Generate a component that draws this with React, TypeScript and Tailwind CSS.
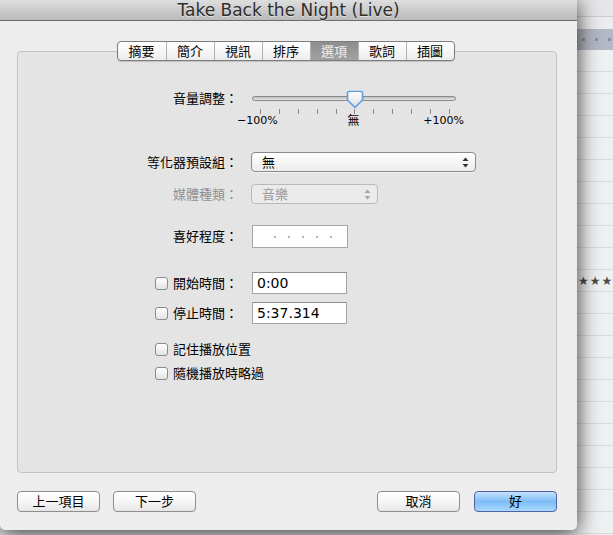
import React from 'react';

const FONT = "font-['DejaVu_Sans','Noto_Sans_CJK_TC',sans-serif]";

const tabs = ['摘要', '簡介', '視訊', '排序', '選項', '歌詞', '插圖'];

function Checkbox() {
  return (
    <span className="inline-block w-[13px] h-[13px] shrink-0 rounded-[3px] border border-[#8c8c8c] bg-gradient-to-b from-white to-[#e4e4e4] shadow-[inset_0_1px_0_#fff]" />
  );
}

function Arrows({ color }: { color: string }) {
  return (
    <svg width="7" height="11" viewBox="0 0 7 11" className="shrink-0">
      <path d="M3.5 0.5 L6.5 4 L0.5 4 Z" fill={color} />
      <path d="M3.5 10.5 L6.5 7 L0.5 7 Z" fill={color} />
    </svg>
  );
}

function Thumb() {
  return (
    <svg width="18" height="19" viewBox="0 0 18 19" className="absolute left-[95px] top-[2px]">
      <defs>
        <linearGradient id="tg" x1="0" y1="0" x2="0" y2="1">
          <stop offset="0" stopColor="#ffffff" />
          <stop offset="1" stopColor="#dcdcdc" />
        </linearGradient>
      </defs>
      <path d="M3 1.5 H15 Q16.5 1.5 16.5 3 V10 L9 17.5 L1.5 10 V3 Q1.5 1.5 3 1.5 Z" fill="url(#tg)" stroke="#5f9ee6" strokeWidth="1.6" strokeLinejoin="round" />
      <path d="M3.5 2.6 H14.5" stroke="#fff" strokeWidth="1" />
    </svg>
  );
}

function Button({ label, primary }: { label: string; primary?: boolean }) {
  return (
    <button
      className={`w-[83px] h-[21px] rounded-[4px] border text-[13px] leading-none text-black flex items-center justify-center ${
        primary
          ? 'border-[#4f64a6] bg-gradient-to-b from-[#c6e2fc] via-[#7dbdf7] to-[#a9d7fc]'
          : 'border-[#8e8e8e] bg-gradient-to-b from-white via-[#f6f6f6] to-[#e6e6e6]'
      }`}
    >
      {label}
    </button>
  );
}

export default function App() {
  const bgRows = Array.from({ length: 22 });

  return (
    <div className={`w-[613px] h-[535px] overflow-hidden flex bg-[#e8e9ec] ${FONT}`}>
      {/* dialog sheet */}
      <div className="relative z-10 w-[577px] h-[530px] shrink-0 bg-[#ededed] rounded-b-[5px] shadow-[0_3px_22px_rgba(0,0,0,0.8)] flex flex-col">
        <div className="h-[21px] shrink-0 bg-gradient-to-b from-[#dedede] to-[#bababa] border-b border-[#6c6c6c] flex items-center justify-center">
          <span className="text-[17px] leading-none text-[#2e2e2e] pt-px [text-shadow:0_1px_0_rgba(255,255,255,0.5)]">
            Take Back the Night (Live)
          </span>
        </div>

        <div className="pl-[17px] pr-[20px] pt-[20px] flex flex-col">
          {/* segmented tabs */}
          <div className="relative z-10 flex justify-center">
            <div className="ml-[-3px] flex h-[20px] rounded-[4px] border border-[#7c7c7c] overflow-hidden bg-gradient-to-b from-white to-[#ededed] shadow-[0_1px_1px_rgba(0,0,0,0.15)]">
              {tabs.map((t, i) => (
                <div
                  key={t}
                  className={`w-[48px] flex items-center justify-center text-[13px] leading-none ${
                    i > 0 ? 'border-l border-[#b3b3b3]' : ''
                  } ${
                    t === '選項'
                      ? 'bg-gradient-to-b from-[#8d8d8d] to-[#a2a2a2] text-[#eeeeee] border-[#7c7c7c]'
                      : 'text-black'
                  }`}
                >
                  {t}
                </div>
              ))}
            </div>
          </div>

          {/* panel */}
          <div className="-mt-[10px] h-[422px] rounded-[4px] border border-[#c3c3c3] bg-[#e4e4e4] flex flex-col text-[13px] leading-none text-black">
            {/* volume slider */}
            <div className="mt-[36px] flex items-center h-[20px]">
              <div className="w-[220px] text-right">音量調整：</div>
              <div className="ml-[13px] relative w-[206px] h-[20px] flex items-center">
                <div className="ml-px w-[204px] h-[5px] rounded-full border border-[#8a8a8a] bg-gradient-to-b from-[#bdbdbd] to-[#e6e6e6]" />
                <Thumb />
              </div>
            </div>
            <div className="mt-px ml-[242px] w-[190px] h-[5px] flex justify-between">
              {Array.from({ length: 11 }).map((_, i) => (
                <span key={i} className="w-px h-[5px] bg-[#8a8a8a]" />
              ))}
            </div>
            <div className="ml-[219px] w-[227px] h-[13px] flex justify-between items-center text-[11px] leading-none">
              <span>−100%</span>
              <span className="text-[12px] pl-[6px]">無</span>
              <span>+100%</span>
            </div>

            {/* equalizer */}
            <div className="mt-[25px] flex items-center h-[20px]">
              <div className="w-[220px] text-right">等化器預設組：</div>
              <div className="ml-[13px] w-[225px] h-[20px] rounded-[4px] border border-[#8a8a8a] bg-gradient-to-b from-white to-[#ececec] flex items-center justify-between pl-[10px] pr-[6px] shadow-[0_1px_0_rgba(255,255,255,0.6)]">
                <span>無</span>
                <Arrows color="#333" />
              </div>
            </div>

            {/* media kind */}
            <div className="mt-[12px] flex items-center h-[20px]">
              <div className="w-[220px] text-right text-[#8f8f8f]">媒體種類：</div>
              <div className="ml-[13px] w-[127px] h-[20px] rounded-[4px] border border-[#b9b9b9] bg-[#ebebeb] flex items-center justify-between pl-[10px] pr-[6px] text-[#9a9a9a]">
                <span>音樂</span>
                <Arrows color="#a5a5a5" />
              </div>
            </div>

            {/* rating */}
            <div className="mt-[21px] flex items-center h-[23px]">
              <div className="w-[220px] text-right">喜好程度：</div>
              <div className="ml-[14px] w-[96px] h-[23px] border border-[#a6a6a6] bg-white flex items-center gap-[12px] pl-[21px]">
                {Array.from({ length: 5 }).map((_, i) => (
                  <span key={i} className="w-[2px] h-[2px] bg-[#b5b5b5]" />
                ))}
              </div>
            </div>

            {/* start time */}
            <div className="mt-[24px] flex items-center h-[22px]">
              <div className="w-[220px] flex items-center justify-end gap-[5px]">
                <Checkbox />
                <span>開始時間：</span>
              </div>
              <div className="ml-[14px] w-[95px] h-[22px] border border-[#a3a3a3] border-t-[#8e8e8e] bg-white flex items-center pl-[4px] text-[14px]">
                0:00
              </div>
            </div>

            {/* stop time */}
            <div className="mt-[8px] flex items-center h-[22px]">
              <div className="w-[220px] flex items-center justify-end gap-[5px]">
                <Checkbox />
                <span>停止時間：</span>
              </div>
              <div className="ml-[14px] w-[95px] h-[22px] border border-[#a3a3a3] border-t-[#8e8e8e] bg-white flex items-center pl-[4px] text-[14px]">
                5:37.314
              </div>
            </div>

            {/* remember */}
            <div className="mt-[16px] ml-[137px] flex items-center gap-[5px] h-[18px]">
              <Checkbox />
              <span>記住播放位置</span>
            </div>
            <div className="mt-[6px] ml-[137px] flex items-center gap-[5px] h-[18px]">
              <Checkbox />
              <span>隨機播放時略過</span>
            </div>
          </div>

          {/* bottom buttons */}
          <div className="mt-[18px] flex items-center">
            <Button label="上一項目" />
            <div className="ml-[13px]">
              <Button label="下一步" />
            </div>
            <div className="ml-auto">
              <Button label="取消" />
            </div>
            <div className="ml-[14px]">
              <Button label="好" primary />
            </div>
          </div>
        </div>
      </div>

      {/* background list of the main window */}
      <div className="flex-1 flex flex-col bg-[#eeeff1]">
        <div className="h-[17px] shrink-0 bg-[#e6e6e8] border-b border-[#cfcfd2]" />
        <div className="h-[12px] shrink-0 bg-[#ececee]" />
        <div className="h-[21px] shrink-0 bg-[#b4b8c4] flex items-center gap-[10px] pl-[5px]">
          {Array.from({ length: 3 }).map((_, i) => (
            <span key={i} className="w-[3px] h-[3px] bg-[#8c909c]" />
          ))}
        </div>
        {bgRows.map((_, i) => (
          <div key={i} className="h-[22px] shrink-0 border-b border-[#d9dadd] bg-[#eff0f2] flex items-center pl-[1px] whitespace-nowrap text-[12px] tracking-[1px] leading-none text-[#4a4a4a]">
            {i === 10 ? '★★★' : ''}
          </div>
        ))}
      </div>
    </div>
  );
}
